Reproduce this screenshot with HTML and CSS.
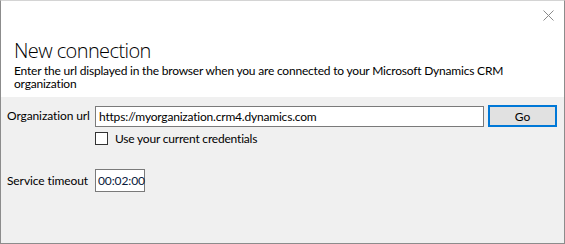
FILE: index.html
```html
<!DOCTYPE html>
<html lang="en">
<head>
    <meta charset="UTF-8">
    <title>New connection</title>
    <link rel="stylesheet" href="styles.css">
</head>
<body>
    <div class="dialog">
        <div class="header">
            <div class="close-row">
                <svg class="close" width="11" height="11" viewBox="0 0 11 11">
                    <path d="M0.5 0.5 L10.5 10.5 M10.5 0.5 L0.5 10.5" stroke="#8a8a8a" stroke-width="1" fill="none"/>
                </svg>
            </div>
            <h1 class="title">New connection</h1>
            <p class="subtitle">Enter the url displayed in the browser when you are connected to your Microsoft Dynamics CRM organization</p>
        </div>
        <div class="body">
            <div class="row">
                <label class="label">Organization url</label>
                <div class="field url-field">https://myorganization.crm4.dynamics.com</div>
                <button class="go">Go</button>
            </div>
            <div class="check-row">
                <span class="checkbox"></span>
                <span>Use your current credentials</span>
            </div>
            <div class="row timeout-row">
                <label class="label">Service timeout</label>
                <div class="field time-field">00:02:00</div>
            </div>
        </div>
    </div>
</body>
</html>
```

FILE: styles.css
```css
*{
    margin: 0;
    padding: 0;
    box-sizing: border-box;
}
html, body{
    width: 565px;
    height: 244px;
    overflow: hidden;
}
body{
    font-family: Lato, "Noto Sans", sans-serif;
    font-size: 12px;
    letter-spacing: -0.1px;
    color: #000;
    background: #f0f0f0;
}
.dialog{
    width: 565px;
    height: 244px;
    border: 1px solid #8c8c8c;
    border-top-color: #d4d4d4;
    display: flex;
    flex-direction: column;
    background: #f0f0f0;
}
.header{
    background: #fff;
    height: 96px;
    padding: 0 13px;
}
.close-row{
    display: flex;
    justify-content: flex-end;
    padding-top: 9px;
    margin-right: -3px;
}
.close{
    display: block;
}
.title{
    font-family: "Open Sans", "Noto Sans", sans-serif;
    font-weight: 300;
    font-size: 20px;
    line-height: 26px;
    letter-spacing: -0.6px;
    margin-top: 17px;
}
.subtitle{
    line-height: 13px;
    width: 510px;
    letter-spacing: -0.2px;
}
.body{
    padding: 8px 0 0 6px;
}
.row{
    display: flex;
    align-items: flex-start;
}
.label{
    width: 88px;
    white-space: nowrap;
    line-height: 22px;
}
.field{
    background: #fff;
    border: 1px solid #7a7a7a;
    height: 21px;
    line-height: 19px;
    padding: 0 3px;
    margin-top: 1px;
    white-space: nowrap;
}
.url-field{
    width: 389px;
    letter-spacing: -0.2px;
}
.go{
    font-family: inherit;
    font-size: 12px;
    width: 69px;
    height: 22px;
    margin-left: 4px;
    background: #e1e1e1;
    border: 2px solid #0078d7;
    color: #000;
}
.check-row{
    display: flex;
    align-items: center;
    height: 13px;
    margin: 5px 0 0 88px;
    gap: 7px;
    letter-spacing: -0.2px;
}
.checkbox{
    width: 13px;
    height: 13px;
    border: 1px solid #333;
    background: #fff;
}
.timeout-row{
    margin-top: 24px;
}
.timeout-row .label{
    line-height: 23px;
}
.time-field{
    width: 50px;
    height: 23px;
    line-height: 21px;
    padding: 0 2px;
    margin-top: 0;
    color: #0a1a3c;
}
```
